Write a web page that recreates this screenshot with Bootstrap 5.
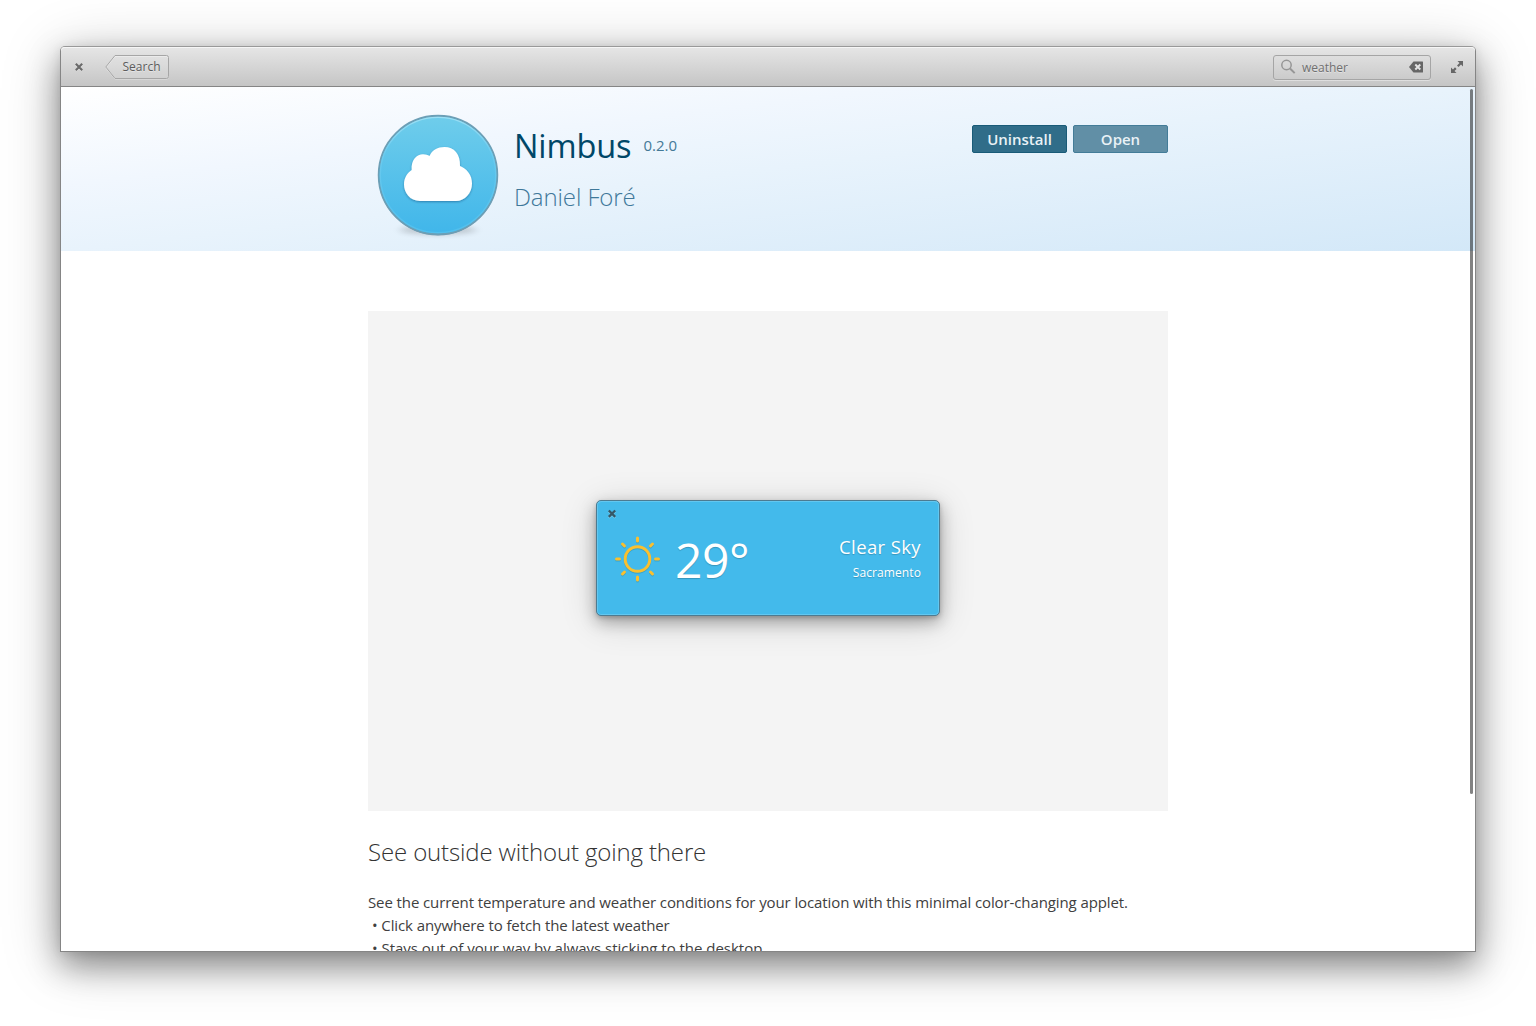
<!DOCTYPE html>
<html lang="en">
<head>
<meta charset="utf-8">
<meta name="viewport" content="width=device-width, initial-scale=1">
<title>Nimbus</title>
<link href="https://cdn.jsdelivr.net/npm/bootstrap@5.3.0/dist/css/bootstrap.min.css" rel="stylesheet">
<style>
body{font-family:"Open Sans","Noto Sans",sans-serif;background:#fff;height:1026px;overflow:hidden;padding:46px 60px 74px}
.window{height:906px;border:1px solid #858585;border-top-color:#999;border-radius:5px 5px 0 0;box-shadow:0 14px 32px rgba(0,0,0,.38),0 8px 60px rgba(0,0,0,.22),0 1px 10px rgba(0,0,0,.08);background:#fff}
.headerbar{height:40px;flex:none;background:linear-gradient(#e6e6e6,#c5c5c5);border-bottom:1px solid #858585;border-radius:4px 4px 0 0;box-shadow:inset 0 1px #f6f6f6;padding:0 11px 0 13px;font-size:12px;color:#666;text-shadow:0 1px rgba(255,255,255,.4)}
.back-btn{width:64px;height:24px;margin-left:21px;background:none;border:0;padding:0 0 0 9px;color:#5c5c5c;line-height:22px;text-shadow:inherit}
.back-btn svg{left:0;top:0;z-index:0}
.search-entry{width:158px;height:25px;margin-top:1px;border:1px solid #a5a5a5;border-radius:3px;margin-right:19px;padding:0 6px;box-shadow:0 1px rgba(255,255,255,.4);color:#707070}
.search-term{margin-left:6px;padding-top:1px}
.hero{height:164px;flex:none;background:linear-gradient(to bottom right,#fff 0%,#f1f7fe 30%,#e8f3fc 50%,#d3e8f8 100%)}
.column{width:800px}
.app-icon{margin:18px 0 0 6px}
.app-text{margin:35px 0 0 12px;color:#0b4c6c}
.app-name{font-size:32.500px;line-height:46px;font-weight:400;letter-spacing:-.1px;padding-top:1px;color:#004768}
.app-version{font-size:15px;margin-left:12px;color:#447997}
.app-dev{font-size:24px;line-height:34px;font-weight:300;color:#3f789a;margin-top:11px;letter-spacing:-.1px}
.actions{margin-top:38px;gap:6px}
.action{width:95px;height:28px;border-radius:2px;padding:0;font-size:15px;font-weight:600;line-height:27px;color:#e9f2f6!important;border:1px solid #195b78;background:#306d89!important}
.action-open{background:#618fa6!important;border-color:#437c98}
.shot{height:500px;margin-top:60px;background:#f4f4f4}
.applet{width:344px;height:116px;margin-bottom:6px;border:1px solid #4c7b91;border-radius:5px;background:#43baeb;color:#fff;box-shadow:inset 0 0 0 1px #62c7f0,inset 0 1px 0 #8ad5f3,0 2px 4px rgba(0,0,0,.18),0 6px 16px rgba(0,0,0,.28),0 6px 36px rgba(0,0,0,.16);text-shadow:0 1px 1px rgba(0,0,0,.2)}
.weather-row{margin-top:12px}
.temp{font-size:48px;line-height:54px;padding-top:2px;margin-left:14px;letter-spacing:-.4px}
.sky{margin-right:2px}
.sky-name{font-size:18.500px;line-height:26px;letter-spacing:.38px;margin-top:-2px}
.sky-city{font-size:12px;line-height:18px;margin-top:4px;letter-spacing:.1px}
.tagline{font-size:24px;line-height:34px;font-weight:300;color:#333;margin:24px 0 0;letter-spacing:-.14px}
.descr{font-size:15px;line-height:23px;color:#404040;margin-top:22px}
.fit-tight{letter-spacing:-.105px}
.fit-snug{letter-spacing:-.02px}
.scroll-thumb{right:2px;top:2px;width:3px;height:705px;border-radius:2px;background:rgba(0,0,0,.49)}
</style>
</head>
<body>
<div class="window d-flex flex-column">
  <header class="headerbar d-flex align-items-center">
    <svg width="10" height="10" viewBox="0 0 10 10"><path d="M2 2.400l6 6M8 2.400l-6 6" stroke="#f3f3f3" stroke-width="2.200"/><path d="M1.800 1.800l6.400 6.400M8.200 1.800L1.800 8.200" stroke="#6a6a6a" stroke-width="2.200"/></svg>
    <button class="back-btn position-relative">
      <svg class="position-absolute" width="64" height="25" viewBox="0 0 64 25"><path d="M10 1.500H61.500q2 0 2 2V22q0 2-2 2H10L.8 13z" fill="none" stroke="#eee" stroke-opacity=".7"/><path d="M10 .5H61.500q2 0 2 2V21.500q0 2-2 2H10L.8 12z" fill="#fff" fill-opacity=".1" stroke="#a6a6a6"/></svg>
      <span class="position-relative">Search</span>
    </button>
    <div class="search-entry d-flex align-items-center ms-auto">
      <svg width="16" height="16" viewBox="0 0 16 16" fill="none" stroke="#969696"><circle cx="6.500" cy="6" r="4.700" stroke-width="1.500"/><path d="M10 9.500l4.700 4.600" stroke-width="2"/></svg>
      <span class="search-term">weather</span>
      <svg class="ms-auto" width="15" height="12" viewBox="0 0 15 12"><path d="M4.500 .5h9q.5 0 .5.500v10q0 .5-.5.500H4.500L0 6z" fill="#666"/><path d="M6.300 3.500l5 5M11.300 3.500l-5 5" stroke="#e4e4e4" stroke-width="1.900"/></svg>
    </div>
    <svg width="14" height="14" viewBox="0 0 14 14"><path d="M7.500 1H13v5.500L11 4.500 8.500 7 7 5.500 9.500 3zM6.500 13H1V7.500L3 9.500 5 7.300 6.600 8.900 4.500 11z" fill="#666"/></svg>
  </header>
  <main class="flex-grow-1 position-relative overflow-hidden d-flex flex-column">
    <section class="hero">
      <div class="column mx-auto d-flex">
        <svg class="app-icon" width="128" height="140" viewBox="0 0 128 140">
          <defs>
            <linearGradient id="disc" x1="0" y1="0" x2="0" y2="1"><stop offset="0" stop-color="#6fcdeb"/><stop offset="1" stop-color="#40b6ea"/></linearGradient>
            <linearGradient id="rim" x1="0" y1="0" x2="0" y2="1"><stop offset="0" stop-color="#9cdff4"/><stop offset=".3" stop-color="#6dcbee"/><stop offset="1" stop-color="#50bfed"/></linearGradient>
            <filter id="soft" x="-30%" y="-150%" width="160%" height="400%"><feGaussianBlur stdDeviation="5 2.500"/></filter>
            <filter id="cloud-shadow"><feDropShadow dx="0" dy="1" stdDeviation=".8" flood-color="#125" flood-opacity=".4"/></filter>
          </defs>
          <ellipse cx="64" cy="125" rx="38" ry="5" opacity=".16" filter="url(#soft)"/>
          <circle cx="64" cy="71" r="59.500" fill="#3e6f8a" opacity=".6"/>
          <circle cx="64" cy="70" r="59.300" fill="url(#disc)" stroke="#6c9fb6" stroke-width="1.900"/>
          <circle cx="64" cy="70" r="57.700" fill="none" stroke="url(#rim)" stroke-width="1.300"/>
          <path filter="url(#cloud-shadow)" fill="#fff" d="M46 96C36 96 30 87.500 30 79.500c0-7 3.400-11.500 7.700-14.500C36.800 55 43 49.300 49 49.300c3 0 4.500.7 6.500 1.700C58 45 64 42 70.500 42 80 42 86.500 49 86 61c7 3 12 9 12 17.500C98 88 91 96 82 96z"/>
        </svg>
        <div class="app-text">
          <div class="d-flex align-items-center"><span class="app-name">Nimbus</span><span class="app-version">0.2.0</span></div>
          <div class="app-dev">Daniel Foré</div>
        </div>
        <div class="actions ms-auto d-flex align-items-start">
          <button class="btn action">Uninstall</button>
          <button class="btn action action-open">Open</button>
        </div>
      </div>
    </section>
    <section class="column mx-auto">
      <div class="shot d-flex align-items-center justify-content-center">
        <div class="applet">
          <svg class="d-block mt-2 ms-2" width="14" height="10" viewBox="-2 0 14 10"><path d="M1.800 2.300l6.400 6.400M8.200 2.300L1.800 8.700" stroke="#7bd0f2" stroke-width="2.300"/><path d="M1.800 1.500l6.400 6.400M8.200 1.500L1.800 7.900" stroke="#355868" stroke-width="2.300"/></svg>
          <div class="weather-row d-flex align-items-center px-3">
            <svg width="48" height="48" viewBox="-24 -24 48 48" fill="none">
              <g stroke="#2689b0" stroke-width="3" stroke-linecap="round" transform="translate(.5 1)" opacity=".45"><circle r="12.300"/><path d="M0-21v3M0 18v3M-21 0h3M18 0h3M-15-15l2 2M15-15l-2 2M-15 15l2-2M15 15l-2-2"/></g>
              <g stroke="#f9c02f" stroke-width="3" stroke-linecap="round" transform="translate(.5 0)"><circle r="12.300"/><path d="M0-21v3M0 18v3M-21 0h3M18 0h3M-15-15l2 2M15-15l-2 2M-15 15l2-2M15 15l-2-2"/></g>
            </svg>
            <div class="temp">29°</div>
            <div class="sky ms-auto text-end"><div class="sky-name">Clear Sky</div><div class="sky-city">Sacramento</div></div>
          </div>
        </div>
      </div>
      <h2 class="tagline">See outside without going there</h2>
      <div class="descr">
        <div class="fit-tight text-nowrap">See the current temperature and weather conditions for your location with this minimal color-changing applet.</div>
        <div class="fit-tight ps-1">• Click anywhere to fetch the latest weather</div>
        <div class="fit-snug ps-1">• Stays out of your way by always sticking to the desktop</div>
      </div>
    </section>
    <div class="scroll-thumb position-absolute"></div>
  </main>
</div>
<script src="https://cdn.jsdelivr.net/npm/bootstrap@5.3.0/dist/js/bootstrap.bundle.min.js"></script>
</body>
</html>
